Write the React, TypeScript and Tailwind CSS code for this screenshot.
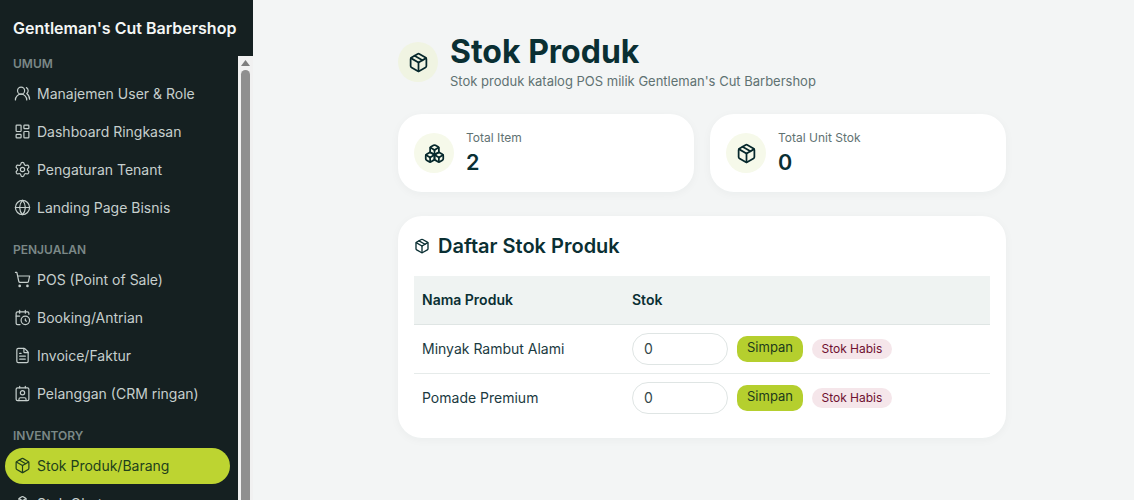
import type { LucideIcon } from "lucide-react";
import {
  Boxes,
  CalendarClock,
  Contact,
  FileText,
  Globe,
  LayoutDashboard,
  Package,
  Settings,
  ShoppingCart,
  UsersRound,
} from "lucide-react";

const menu: Array<{ label: string; items: Array<{ name: string; icon: LucideIcon; active?: boolean }> }> = [
  {
    label: "UMUM",
    items: [
      { name: "Manajemen User & Role", icon: UsersRound },
      { name: "Dashboard Ringkasan", icon: LayoutDashboard },
      { name: "Pengaturan Tenant", icon: Settings },
      { name: "Landing Page Bisnis", icon: Globe },
    ],
  },
  {
    label: "PENJUALAN",
    items: [
      { name: "POS (Point of Sale)", icon: ShoppingCart },
      { name: "Booking/Antrian", icon: CalendarClock },
      { name: "Invoice/Faktur", icon: FileText },
      { name: "Pelanggan (CRM ringan)", icon: Contact },
    ],
  },
  {
    label: "INVENTORY",
    items: [
      { name: "Stok Produk/Barang", icon: Package, active: true },
      { name: "Stok Obat", icon: Boxes },
    ],
  },
];

const products = ["Minyak Rambut Alami", "Pomade Premium"];

function Sidebar() {
  return (
    <aside className="flex h-full w-[253px] shrink-0 flex-col bg-[#152021]">
      <div className="flex h-[56px] shrink-0 items-center px-[13px] text-[16px] font-semibold text-[#f3f6f5]">
        Gentleman's Cut Barbershop
      </div>
      <div className="flex min-h-0 flex-1">
        <nav className="min-w-0 flex-1 overflow-hidden pr-2 pl-[5px]">
          {menu.map((group) => (
            <div key={group.label} className="mb-4">
              <p className="px-2 text-[12px] leading-[15px] font-semibold text-[#7b8887]">{group.label}</p>
              <ul className="mt-[5px]">
                {group.items.map((item) => (
                  <li
                    key={item.name}
                    className={
                      item.active
                        ? "mb-[2px] flex h-9 items-center gap-[6.5px] rounded-[18px] bg-[#bdd431] pr-2 pb-[2px] pl-[8.5px] text-[14px] text-[#21401c]"
                        : "mb-[2px] flex h-9 items-center gap-[6.5px] pr-2 pb-[2px] pl-[8.5px] text-[14px] text-[#c6cfcd]"
                    }
                  >
                    <item.icon size={17} strokeWidth={1.7} />
                    {item.name}
                  </li>
                ))}
              </ul>
            </div>
          ))}
        </nav>
        <div className="flex w-[15px] shrink-0 flex-col bg-[#f1f1f1] px-[3px]">
          <svg viewBox="0 0 9 14" className="h-[14px] w-[9px] fill-[#7d7d7d]">
            <path d="M4.5 4 9 10H0z" />
          </svg>
          <div className="flex-1 rounded-t-[5px] bg-[#8f8f8f]" />
        </div>
      </div>
    </aside>
  );
}

function StatCard({ icon: Icon, label, value }: { icon: LucideIcon; label: string; value: string }) {
  return (
    <div className="flex h-[78px] items-center gap-3 rounded-3xl bg-white px-4 shadow-[0_2px_10px_rgba(15,40,40,0.04)]">
      <div className="flex size-10 items-center justify-center rounded-full bg-[#f6f9ea] text-[#06282c]">
        <Icon size={21} strokeWidth={2} />
      </div>
      <div>
        <p className="text-[12px] leading-4 text-[#5f7272]">{label}</p>
        <p className="mt-[2px] text-[21.6px] leading-7 font-semibold text-[#0a2f33]">{value}</p>
      </div>
    </div>
  );
}

export default function App() {
  return (
    <div className="flex h-[500px] overflow-hidden bg-[#f3f5f5] font-['Inter',sans-serif]">
      <Sidebar />
      <main className="min-w-0 flex-1 pt-[33px] pl-[145px]">
        <div className="w-[608px]">
          <header className="flex items-center gap-3">
            <div className="flex size-10 items-center justify-center rounded-full bg-[#f0f4e2] text-[#06282c]">
              <Package size={21} strokeWidth={2} />
            </div>
            <div>
              <h1 className="text-[32px] leading-[38px] font-bold text-[#0a2f33]">Stok Produk</h1>
              <p className="text-[13px] leading-[20px] text-[#5f7272]">
                Stok produk katalog POS milik Gentleman's Cut Barbershop
              </p>
            </div>
          </header>

          <div className="mt-[23px] grid grid-cols-2 gap-4">
            <StatCard icon={Boxes} label="Total Item" value="2" />
            <StatCard icon={Package} label="Total Unit Stok" value="0" />
          </div>

          <section className="mt-6 rounded-3xl bg-white p-4 shadow-[0_2px_10px_rgba(15,40,40,0.04)]">
            <h2 className="flex h-[28px] items-center gap-2 text-[20px] font-semibold text-[#0a2f33]">
              <Package size={16} strokeWidth={2} />
              Daftar Stok Produk
            </h2>
            <table className="mt-4 w-full text-left text-[14px] text-[#1b3a3f]">
              <thead className="bg-[#eff3f2] text-[#0a2f33]">
                <tr className="h-[48px] border-b border-[#dfe5e4]">
                  <th className="w-[210px] px-2 font-semibold">Nama Produk</th>
                  <th className="px-2 font-semibold">Stok</th>
                </tr>
              </thead>
              <tbody>
                {products.map((product) => (
                  <tr key={product} className="h-[49px] border-b border-[#e6ebea] last:border-b-0">
                    <td className="px-2">{product}</td>
                    <td className="px-2">
                      <div className="flex items-center gap-[9px]">
                        <input
                          readOnly
                          value="0"
                          className="h-8 w-24 rounded-2xl border border-[#dfe5e4] bg-white px-[11px] text-[14px] text-[#33484a] outline-none"
                        />
                        <button className="h-[26px] rounded-[10px] bg-[#b5cf2e] px-[10px] pb-[2px] text-[13px] text-[#1d3a1c]">
                          Simpan
                        </button>
                        <span className="rounded-[10px] bg-[#f5e6ea] px-[9.5px] py-[2px] text-[12px] leading-4 text-[#6f0f30]">
                          Stok Habis
                        </span>
                      </div>
                    </td>
                  </tr>
                ))}
              </tbody>
            </table>
          </section>
        </div>
      </main>
    </div>
  );
}
